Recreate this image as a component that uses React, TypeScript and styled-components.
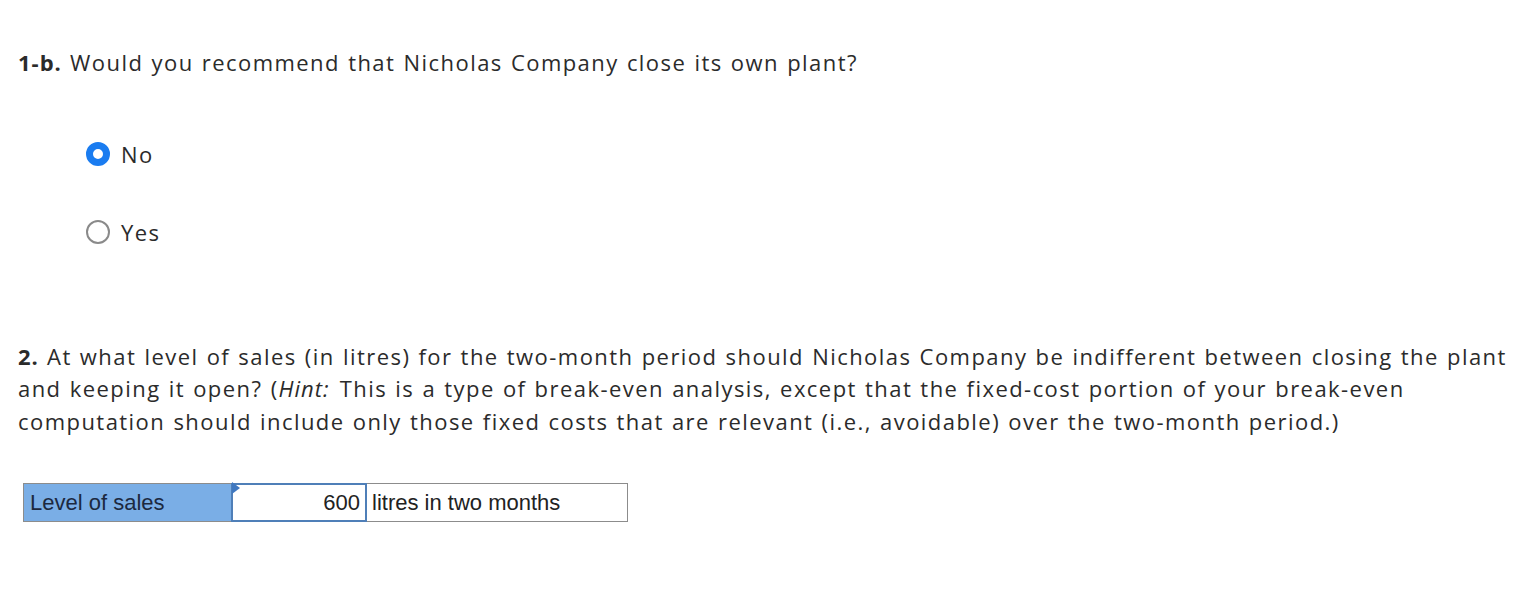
import React from "react";
import styled, { createGlobalStyle } from "styled-components";

const Global = createGlobalStyle`
  html, body { margin: 0; padding: 0; background: #fff; }
  body { font-family: "Open Sans", "Noto Sans", sans-serif; color: #2b2b2b; }
`;

const Page = styled.div`
  width: 1520px;
  height: 615px;
  box-sizing: border-box;
  padding: 46px 6px 0 18px;
  overflow: hidden;
`;

const Question = styled.p<{ $mt?: number }>`
  margin: ${(p) => p.$mt ?? 0}px 0 0 0;
  font-size: 22px;
  line-height: 32.5px;
  letter-spacing: 1.45px;
  word-spacing: 1px;
`;

const Num = styled.b`
  font-weight: 700;
  letter-spacing: 1px;
`;

const Hint = styled.i`
  letter-spacing: 1px;
  padding-right: 2px;
`;

const Options = styled.div`
  display: flex;
  flex-direction: column;
  gap: 54px;
  margin: 63px 0 0 68px;
`;

const Option = styled.label`
  display: flex;
  align-items: center;
  gap: 11px;
  font-size: 22px;
  letter-spacing: 1.45px;
  line-height: 24px;
  height: 24px;
`;

const Radio = styled.span<{ $checked?: boolean }>`
  width: 24px;
  height: 24px;
  box-sizing: border-box;
  border-radius: 50%;
  border: ${(p) => (p.$checked ? "7px solid #1a7cf0" : "2px solid #8a8a8a")};
  background: #fff;
`;

const Table = styled.div`
  display: grid;
  grid-template-columns: 208px 136px 261px;
  height: 39px;
  margin: 46px 0 0 5px;
  font-family: "Liberation Sans", Arial, sans-serif;
  font-size: 22px;
  color: #222;
  width: 605px;
`;

const LabelCell = styled.div`
  background: #7aaee6;
  border: 1px solid #8c8c8c;
  border-right: none;
  display: flex;
  align-items: center;
  padding-left: 6px;
  color: #1c2940;
`;

const InputCell = styled.div`
  position: relative;
  border: 2px solid #4f7fb8;
  background: #fff;
  display: flex;
  align-items: center;
  justify-content: flex-end;
  padding-right: 5px;
`;

const Flag = styled.span`
  position: absolute;
  left: -1px;
  top: -1px;
  width: 0;
  height: 0;
  border-top: 6px solid transparent;
  border-bottom: 6px solid transparent;
  border-left: 8px solid #3f78c0;
  transform: translateY(-2px);
`;

const UnitCell = styled.div`
  border: 1px solid #8c8c8c;
  border-left: none;
  display: flex;
  align-items: center;
  padding-left: 5px;
`;

export default function App() {
  return (
    <>
      <Global />
      <Page>
        <Question>
          <Num>1-b.</Num> Would you recommend that Nicholas Company close its own plant?
        </Question>
        <Options>
          <Option>
            <Radio $checked />
            No
          </Option>
          <Option>
            <Radio />
            Yes
          </Option>
        </Options>
        <Question $mt={96}>
          <Num>2.</Num> At what level of sales (in litres) for the two-month period should Nicholas
          Company be indifferent between closing the plant and keeping it open? (<Hint>Hint:</Hint> This is a
          type of break-even analysis, except that the fixed-cost portion of your break-even
          computation should include only those fixed costs that are relevant (i.e., avoidable) over
          the two-month period.)
        </Question>
        <Table>
          <LabelCell>Level of sales</LabelCell>
          <InputCell>
            <Flag />
            600
          </InputCell>
          <UnitCell>litres in two months</UnitCell>
        </Table>
      </Page>
    </>
  );
}
